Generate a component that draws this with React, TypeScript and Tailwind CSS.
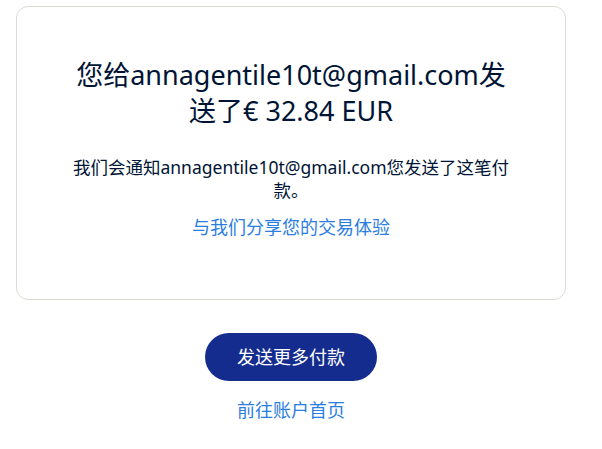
import React from "react";

export default function App() {
  return (
    <div className="min-h-screen bg-white pt-[6px] font-['Noto_Sans','Noto_Sans_CJK_SC',sans-serif]">
      <div className="mx-[16px] w-[550px]">
        {/* Confirmation card */}
        <div className="rounded-[12px] border border-[#dcdcd4] px-[52px] pt-[50px] pb-[60px] text-center">
          <h1 className="px-[4px] text-[27px] leading-[36px] text-[#001435]">
            您给annagentile10t@gmail.com发送了€ 32.84 EUR
          </h1>
          <p className="mt-[27px] text-[17.5px] leading-[23px] text-[#001435]">
            我们会通知annagentile10t@gmail.com您发送了这笔付款。
          </p>
          <a href="#" className="mt-[13px] block text-[18px] leading-[24px] text-[#2a7de1]">
            与我们分享您的交易体验
          </a>
        </div>

        {/* Actions */}
        <div className="mt-[33px] flex flex-col items-center">
          <button className="h-[48px] w-[172px] rounded-full bg-[#142c8e] text-[18px] text-white">
            发送更多付款
          </button>
          <a href="#" className="mt-[17px] text-[18px] leading-[24px] text-[#2a7de1]">
            前往账户首页
          </a>
        </div>
      </div>
    </div>
  );
}
